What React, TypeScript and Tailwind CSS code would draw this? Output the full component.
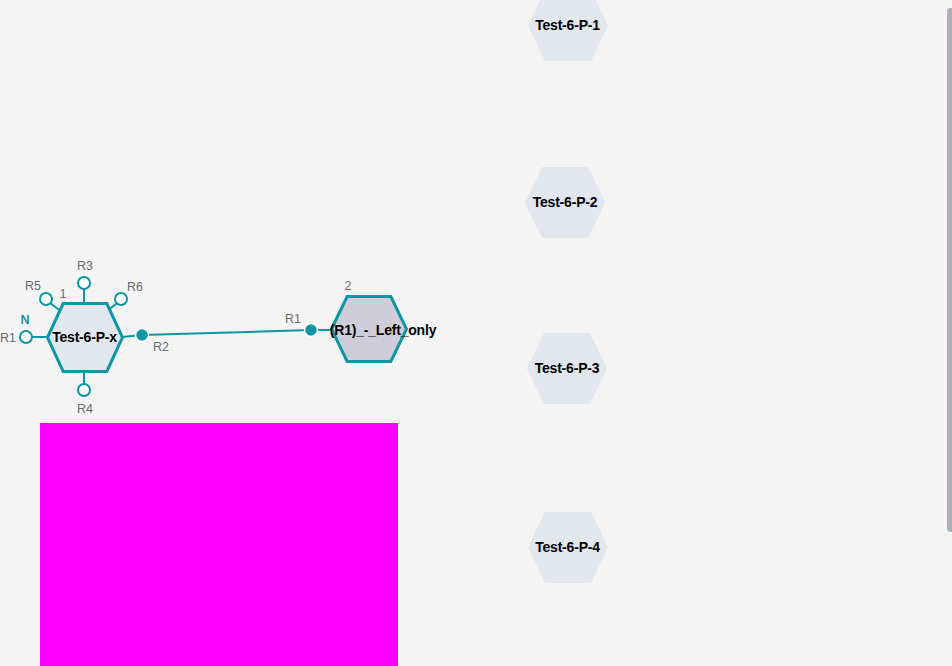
import React from 'react';

const TEAL = '#0b96a3';
const FONT = { fontFamily: '"Liberation Sans", Arial, sans-serif' };

type HexProps = {
  x: number;
  y: number;
  w: number;
  h: number;
  label: string;
  fill: string;
  stroke?: string;
  shift?: number;
};

const hexPoints = (w: number, h: number, pad: number) => {
  const q = w * 0.22;
  return [
    [pad, h / 2],
    [q, pad],
    [w - q, pad],
    [w - pad, h / 2],
    [w - q, h - pad],
    [q, h - pad],
  ]
    .map((p) => p.join(','))
    .join(' ');
};

const HexNode = ({ x, y, w, h, label, fill, stroke, shift = 0 }: HexProps) => (
  <div
    className="absolute flex items-center justify-center"
    style={{ left: x - w / 2, top: y - h / 2, width: w, height: h }}
  >
    <svg className="absolute inset-0" width={w} height={h}>
      <polygon
        points={hexPoints(w, h, stroke ? 1.5 : 1)}
        fill={fill}
        stroke={stroke ?? fill}
        strokeWidth={stroke ? 3 : 2}
        strokeLinejoin={stroke ? 'miter' : 'round'}
      />
    </svg>
    <span
      className="relative whitespace-nowrap text-[14px] font-bold tracking-[-0.2px] text-black"
      style={{ left: shift, top: shift ? 2 : 0 }}
    >
      {label}
    </span>
  </div>
);

const Label = ({ x, y, text, cls = 'text-[#6a6a6a]' }: { x: number; y: number; text: string; cls?: string }) => (
  <span
    className={`absolute -translate-x-1/2 -translate-y-1/2 whitespace-nowrap text-[12.5px] leading-none ${cls}`}
    style={{ left: x, top: y }}
  >
    {text}
  </span>
);

const Port = ({ cx, cy, filled }: { cx: number; cy: number; filled?: boolean }) =>
  filled ? (
    <circle cx={cx} cy={cy} r={6.5} fill={TEAL} stroke="#ffffff" strokeWidth={1.5} />
  ) : (
    <circle cx={cx} cy={cy} r={6} fill="#ffffff" stroke={TEAL} strokeWidth={2} />
  );

export default function App() {
  return (
    <div className="relative h-[666px] w-[952px] overflow-hidden bg-[#f4f4f4]" style={FONT}>
      {/* edges and port stubs */}
      <svg className="absolute inset-0" width={952} height={666}>
        <line x1={142} y1={335} x2={311} y2={330} stroke={TEAL} strokeWidth={2} />
        <line x1={311} y1={330} x2={333} y2={330} stroke={TEAL} strokeWidth={2} />
        <line x1={122} y1={337} x2={142} y2={335} stroke={TEAL} strokeWidth={2} />
        <line x1={84} y1={289} x2={84} y2={304} stroke={TEAL} strokeWidth={2} />
        <line x1={50} y1={303} x2={62} y2={312} stroke={TEAL} strokeWidth={2} />
        <line x1={117} y1={303} x2={106} y2={312} stroke={TEAL} strokeWidth={2} />
        <line x1={32} y1={337} x2={47} y2={337} stroke={TEAL} strokeWidth={2} />
        <line x1={84} y1={371} x2={84} y2={384} stroke={TEAL} strokeWidth={2} />
      </svg>

      <HexNode x={84.5} y={337} w={78} h={71} label="Test-6-P-x" fill="#e2e6ed" stroke={TEAL} />
      <HexNode x={369} y={328.5} w={78} h={68} label="(R1)_-_Left_only" fill="#cfcdd8" stroke={TEAL} shift={14} />

      <svg className="absolute inset-0" width={952} height={666}>
        <Port cx={84} cy={283} />
        <Port cx={46} cy={299} />
        <Port cx={121} cy={299} />
        <Port cx={26} cy={337} />
        <Port cx={84} cy={390} />
        <Port cx={142} cy={335} filled />
        <Port cx={311} cy={330} filled />
      </svg>

      <Label x={85} y={266} text="R3" />
      <Label x={33} y={286} text="R5" />
      <Label x={63} y={294} text="1" />
      <Label x={135} y={287} text="R6" />
      <Label x={25} y={320} text="N" cls="font-bold text-[#0b96a3]" />
      <Label x={8} y={338} text="R1" />
      <Label x={161} y={347} text="R2" />
      <Label x={85} y={409} text="R4" />
      <Label x={293} y={319} text="R1" />
      <Label x={348} y={286} text="2" />

      <HexNode x={567.5} y={25} w={80} h={71} label="Test-6-P-1" fill="#e2e6ed" />
      <HexNode x={565} y={202} w={80} h={71} label="Test-6-P-2" fill="#e2e6ed" />
      <HexNode x={567} y={368} w={80} h={71} label="Test-6-P-3" fill="#e2e6ed" />
      <HexNode x={567.5} y={547.5} w={80} h={71} label="Test-6-P-4" fill="#e2e6ed" />

      <div className="absolute left-[40px] top-[423px] h-[260px] w-[358px] bg-[#ff00ff]" />

      <div className="absolute right-0 top-[8px] h-[524px] w-[5px] rounded-l-sm bg-[#a9b0ba]" />
    </div>
  );
}
